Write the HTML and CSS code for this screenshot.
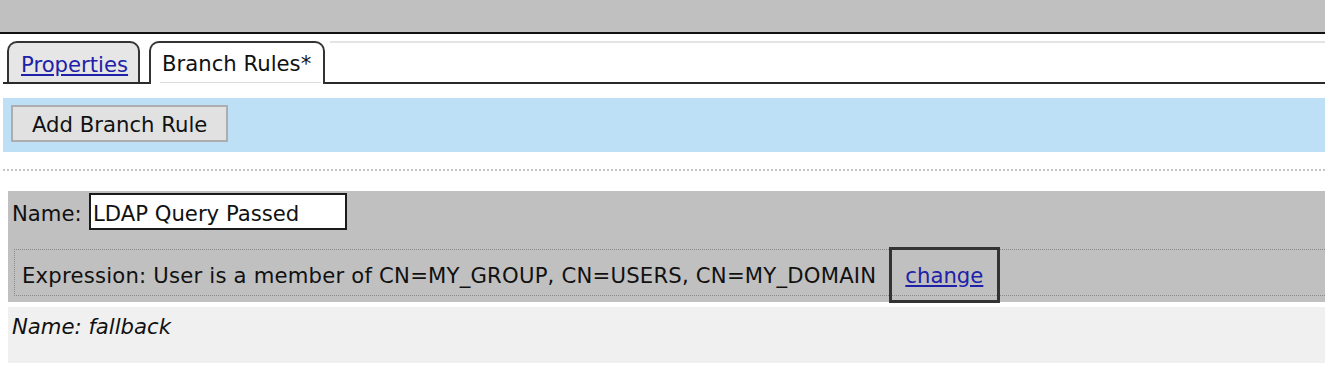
FILE: index.html
```html
<!DOCTYPE html>
<html>
<head>
<meta charset="utf-8">
<title>Branch Rules</title>
<link rel="stylesheet" href="styles.css">
</head>
<body>
<div class="header"></div>
<div class="tabs">
  <div class="tab"><a href="#" class="link">Properties</a></div>
  <div class="tab active"><span class="tab-label">Branch Rules*</span></div>
  <div class="tab-fill"></div>
</div>
<div class="toolbar">
  <button class="btn">Add Branch Rule</button>
</div>
<div class="separator"></div>
<div class="rule">
  <div class="name-row">
    <span class="label">Name:</span>
    <input class="name-input" type="text" value="LDAP Query Passed">
  </div>
  <div class="expr">
    <span class="expr-text">Expression: User is a member of CN=MY_GROUP, CN=USERS, CN=MY_DOMAIN</span>
    <span class="focus"><a href="#" class="link">change</a></span>
  </div>
</div>
<div class="rule-collapsed">
  <span class="collapsed-name">Name: fallback</span>
</div>
</body>
</html>
```

FILE: styles.css
```css
html, body {
  margin: 0;
  padding: 0;
  background: #ffffff;
}
body {
  font-family: "DejaVu Sans", sans-serif;
  font-size: 21.2px;
  line-height: 25px;
  color: #111111;
  overflow: hidden;
}
.header {
  height: 32px;
  background: #c0c0c0;
  border-bottom: 2px solid #111111;
}
.tabs {
  display: flex;
  align-items: flex-end;
  margin-left: 3px;
  padding-top: 7px;
  border-bottom: 2px solid #2a2a2a;
}
.tab {
  box-sizing: border-box;
  height: 41px;
  border: 2px solid #333333;
  border-bottom: none;
  border-radius: 10px 10px 0 0;
  background: #e6e6e6;
  display: flex;
  align-items: center;
  padding: 3px 0 0 12px;
  margin-left: 4px;
  width: 133px;
  white-space: nowrap;
}
.tab.active {
  background: #ffffff;
  width: 176px;
  height: 43px;
  margin-left: 9px;
  margin-bottom: -2px;
  padding: 0 0 0 11px;
  align-items: flex-end;
}
.tab-label {
  border-bottom: 1px solid #dddddd;
  padding: 0 10px 6px 2px;
  margin: 0 0 1px -2px;
}
.tab-fill {
  flex: 1;
  align-self: flex-start;
  margin-left: 5px;
  border-top: 2px solid #e4e4e4;
}
.link {
  color: #2020a8;
  text-decoration: underline;
}
.toolbar {
  margin: 14px 0 0 3px;
  height: 54px;
  background: #bee0f6;
  box-sizing: border-box;
  padding: 7px 8px;
}
.btn {
  box-sizing: border-box;
  width: 217px;
  height: 37px;
  background: #e1e1e1;
  border: 2px solid #adadad;
  font-family: inherit;
  font-size: 21.2px;
  color: #111111;
  text-align: left;
  padding: 1px 0 0 19px;
}
.separator {
  margin: 17px 0 0 3px;
  border-top: 2px dotted #c4c4c4;
}
.rule {
  margin: 20px 0 0 8px;
  background: #c0c0c0;
  padding: 2px 0 6px 0;
}
.name-row {
  display: flex;
  align-items: center;
  height: 37px;
  padding-left: 4px;
}
.label {
  width: 77px;
  padding-top: 3px;
}
.name-input {
  box-sizing: border-box;
  width: 258px;
  height: 37px;
  border: 2px solid #1a1a1a;
  background: #ffffff;
  font-family: inherit;
  font-size: 21.2px;
  color: #111111;
  padding: 3px 0 0 2px;
  margin: 0;
}
.expr {
  box-sizing: border-box;
  margin: 19px 0 0 6px;
  height: 47px;
  border: 1px dotted #8a8a8a;
  border-right: none;
  display: flex;
  align-items: center;
  padding: 5px 0 0 7px;
  white-space: nowrap;
}
.expr-text {
  letter-spacing: 0.2px;
}
.focus {
  box-sizing: border-box;
  align-self: flex-start;
  margin: -8px 0 0 13px;
  height: 56px;
  border: 3px solid #333333;
  padding: 1px 14px 0 13px;
  display: flex;
  align-items: center;
}
.rule-collapsed {
  margin: 5px 0 0 8px;
  height: 56px;
  background: #f0f0f0;
  padding: 7px 0 0 4px;
  box-sizing: border-box;
}
.collapsed-name {
  font-style: italic;
}
```
